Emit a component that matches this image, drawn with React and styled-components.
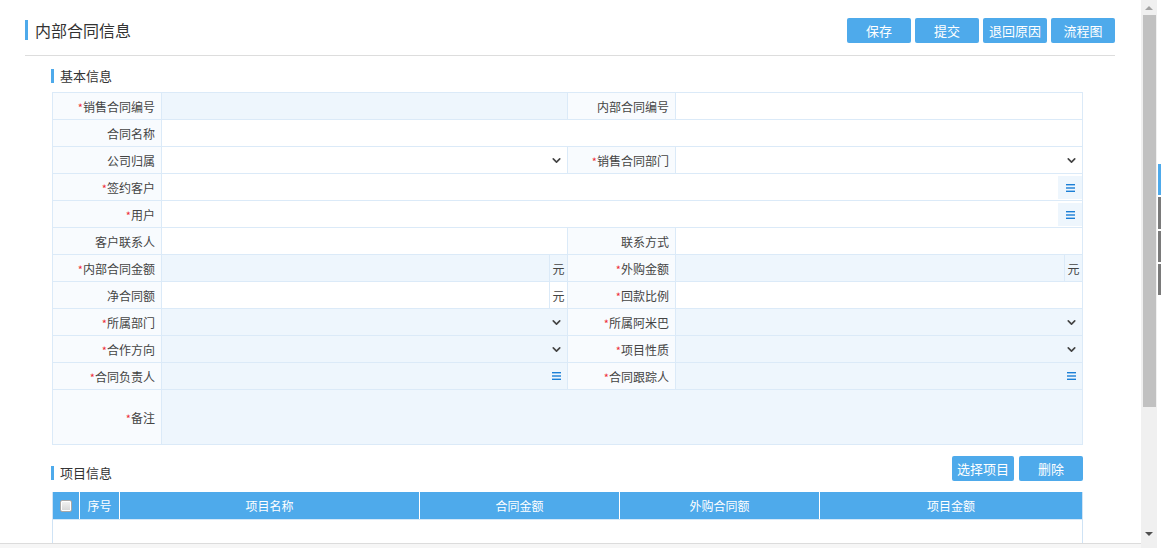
import React from 'react';
import styled, { createGlobalStyle } from 'styled-components';
import { ChevronDown } from 'lucide-react';

const GlobalStyle = createGlobalStyle`
  html, body {
    margin: 0;
    padding: 0;
    background: #fff;
    overflow: hidden;
  }
  body {
    font-family: "Noto Sans CJK SC", "Noto Sans", sans-serif;
    color: #333;
  }
  * {
    box-sizing: border-box;
  }
`;

const Frame = styled.div`
  display: flex;
  width: 1161px;
  height: 548px;
`;

const Main = styled.div`
  display: flex;
  flex-direction: column;
  width: 1141px;
  flex: none;
`;

const Content = styled.div`
  height: 543px;
  overflow: hidden;
  padding: 0 26px 0 25px;
`;

const BottomBar = styled.div`
  height: 5px;
  border-top: 1px solid #dcdcdc;
  background: #f6f6f6;
`;

const Scrollbar = styled.div`
  width: 16px;
  flex: none;
  background: #f0f0f0;
  display: flex;
  flex-direction: column;
  align-items: center;
`;

const Arrow = styled.div`
  width: 0;
  height: 0;
  border-left: 4px solid transparent;
  border-right: 4px solid transparent;
  ${p => (p.$down ? 'border-top: 4px solid #505050;' : 'border-bottom: 4px solid #a3a3a3;')}
  margin: ${p => (p.$down ? '0 0 12px' : '6px 0 0')};
`;

const Thumb = styled.div`
  width: 13px;
  height: 392px;
  margin-top: 5px;
  background: #c1c1c1;
  flex: none;
`;

const Spacer = styled.div`
  flex: 1;
`;

const Edge = styled.div`
  width: 4px;
  flex: none;
  display: flex;
  flex-direction: column;
  padding: 164px 0 0 1px;
  gap: 2px;
  background: #fff;
`;

const EdgeMark = styled.div`
  height: ${p => p.$h}px;
  background: ${p => p.$c};
`;

const Header = styled.div`
  display: flex;
  align-items: center;
  justify-content: space-between;
  padding: 18px 0 12px;
  border-bottom: 1px solid #dddddd;
`;

const PageTitle = styled.h1`
  margin: 0;
  font-size: 16px;
  font-weight: normal;
  line-height: 20px;
  color: #333;
  border-left: 3px solid #4eaaeb;
  padding-left: 7px;
  margin-top: -1px;
`;

const ButtonGroup = styled.div`
  display: flex;
  gap: ${p => p.$gap || 4}px;
`;

const Button = styled.button`
  width: ${p => p.$w || 64}px;
  height: 25px;
  border: none;
  border-radius: 2px;
  background: #4eaaeb;
  color: #fff;
  font-family: inherit;
  font-size: 13px;
  padding: 0;
  cursor: pointer;
`;

const Body = styled.div`
  padding-left: 26px;
`;

const SectionTitle = styled.div`
  font-size: 13px;
  line-height: 14px;
  color: #333;
  border-left: 3px solid #4eaaeb;
  padding-left: 6px;
  margin: ${p => p.$m || '0'};
`;

const FormTable = styled.table`
  width: 1030px;
  border-collapse: collapse;
  table-layout: fixed;
  margin-top: 9px;
  margin-left: 1px;
  font-size: 12px;

  td {
    border: 1px solid #dbeaf8;
    height: 27px;
    padding: 0;
  }
`;

const Label = styled.td`
  background: #f8fbfe;
  text-align: right;
  padding-right: 6px !important;
  color: #444;
  white-space: nowrap;
`;

const Star = styled.span`
  color: #ee2b3a;
  font-size: 11px;
`;

const Value = styled.td`
  background: ${p => (p.$fill ? '#eef6fd' : '#fff')};
  height: ${p => p.$h || 27}px !important;
`;

const ValueInner = styled.div`
  display: flex;
  align-items: stretch;
  height: 100%;
  min-height: 26px;
`;

const Field = styled.div`
  flex: 1;
`;

const Unit = styled.div`
  width: 18px;
  border-left: 1px solid #dbeaf8;
  display: flex;
  align-items: center;
  justify-content: center;
  color: #444;
`;

const Addon = styled.div`
  width: ${p => p.$w || 18}px;
  display: flex;
  align-items: center;
  justify-content: center;
  color: #444;
  background: ${p => (p.$tint ? '#eef6fd' : 'transparent')};
  margin: ${p => (p.$tint ? '2px 0 1px' : '0')};
`;

const ProjectBar = styled.div`
  display: flex;
  align-items: flex-end;
  justify-content: space-between;
  margin-top: 11px;
  width: 1031px;
  margin-left: 1px;
`;

const GridTable = styled.div`
  width: 1031px;
  margin: 11px 0 0 1px;
  border-left: 1px solid #cfe3f5;
  border-right: 1px solid #cfe3f5;
  height: 60px;
`;

const HeadRow = styled.div`
  display: grid;
  grid-template-columns: 26px 40px 300px 200px 200px 1fr;
  background: #4eaaeb;
  height: 28px;
  border-bottom: 1px solid #d4e8f8;
`;

const HeadCell = styled.div`
  color: #fff;
  font-size: 12px;
  display: flex;
  align-items: center;
  justify-content: center;
  border-left: ${p => (p.$first ? 'none' : '1px solid #fff')};
`;

const Check = styled.span`
  width: 12px;
  height: 12px;
  border: 1px solid #a8a8a8;
  background: linear-gradient(#f4f4f4, #d6d6d6);
  border-radius: 2px;
  box-shadow: inset 0 0 0 1px #fff;
`;

const MenuIcon = () => (
  <svg width="9" height="8" viewBox="0 0 9 8">
    <rect x="0" y="0" width="9" height="1.4" fill="#1b7fd6" />
    <rect x="0" y="3.3" width="9" height="1.4" fill="#1b7fd6" />
    <rect x="0" y="6.6" width="9" height="1.4" fill="#1b7fd6" />
  </svg>
);

const Chevron = () => <ChevronDown size={13} strokeWidth={3} color="#444" />;

const Lbl = ({ req, children }) => (
  <Label>
    {req && <Star>*</Star>}
    {children}
  </Label>
);

const Val = ({ fill, addon, colSpan, h }) => (
  <Value $fill={fill} colSpan={colSpan} $h={h}>
    <ValueInner>
      <Field />
      {addon === 'unit' && <Unit>元</Unit>}
      {addon === 'select' && <Addon $w={22}><Chevron /></Addon>}
      {addon === 'menu' && <Addon $w={22}><MenuIcon /></Addon>}
      {addon === 'menubox' && <Addon $w={24} $tint><MenuIcon /></Addon>}
    </ValueInner>
  </Value>
);

export default function App() {
  return (
    <Frame>
      <GlobalStyle />
      <Main>
        <Content>
          <Header>
            <PageTitle>内部合同信息</PageTitle>
            <ButtonGroup>
              <Button>保存</Button>
              <Button>提交</Button>
              <Button>退回原因</Button>
              <Button>流程图</Button>
            </ButtonGroup>
          </Header>

          <Body>
            <SectionTitle $m="13px 0 0">基本信息</SectionTitle>
            <FormTable>
              <colgroup>
                <col style={{ width: 109 }} />
                <col style={{ width: 406 }} />
                <col style={{ width: 108 }} />
                <col style={{ width: 407 }} />
              </colgroup>
              <tbody>
                <tr>
                  <Lbl req>销售合同编号</Lbl>
                  <Val fill />
                  <Lbl>内部合同编号</Lbl>
                  <Val />
                </tr>
                <tr>
                  <Lbl>合同名称</Lbl>
                  <Val colSpan={3} />
                </tr>
                <tr>
                  <Lbl>公司归属</Lbl>
                  <Val addon="select" />
                  <Lbl req>销售合同部门</Lbl>
                  <Val addon="select" />
                </tr>
                <tr>
                  <Lbl req>签约客户</Lbl>
                  <Val colSpan={3} addon="menubox" />
                </tr>
                <tr>
                  <Lbl req>用户</Lbl>
                  <Val colSpan={3} addon="menubox" />
                </tr>
                <tr>
                  <Lbl>客户联系人</Lbl>
                  <Val />
                  <Lbl>联系方式</Lbl>
                  <Val />
                </tr>
                <tr>
                  <Lbl req>内部合同金额</Lbl>
                  <Val fill addon="unit" />
                  <Lbl req>外购金额</Lbl>
                  <Val fill addon="unit" />
                </tr>
                <tr>
                  <Lbl>净合同额</Lbl>
                  <Val addon="unit" />
                  <Lbl req>回款比例</Lbl>
                  <Val />
                </tr>
                <tr>
                  <Lbl req>所属部门</Lbl>
                  <Val fill addon="select" />
                  <Lbl req>所属阿米巴</Lbl>
                  <Val fill addon="select" />
                </tr>
                <tr>
                  <Lbl req>合作方向</Lbl>
                  <Val fill addon="select" />
                  <Lbl req>项目性质</Lbl>
                  <Val fill addon="select" />
                </tr>
                <tr>
                  <Lbl req>合同负责人</Lbl>
                  <Val fill addon="menu" />
                  <Lbl req>合同跟踪人</Lbl>
                  <Val fill addon="menu" />
                </tr>
                <tr>
                  <Lbl req>备注</Lbl>
                  <Val fill colSpan={3} h={55} />
                </tr>
              </tbody>
            </FormTable>

            <ProjectBar>
              <SectionTitle $m="0 0 1px -1px">项目信息</SectionTitle>
              <ButtonGroup $gap={5}>
                <Button $w={62}>选择项目</Button>
                <Button $w={64}>删除</Button>
              </ButtonGroup>
            </ProjectBar>

            <GridTable>
              <HeadRow>
                <HeadCell $first><Check /></HeadCell>
                <HeadCell>序号</HeadCell>
                <HeadCell>项目名称</HeadCell>
                <HeadCell>合同金额</HeadCell>
                <HeadCell>外购合同额</HeadCell>
                <HeadCell>项目金额</HeadCell>
              </HeadRow>
            </GridTable>
          </Body>
        </Content>
        <BottomBar />
      </Main>
      <Scrollbar>
        <Arrow />
        <Thumb />
        <Spacer />
        <Arrow $down />
      </Scrollbar>
      <Edge>
        <EdgeMark $h={31} $c="#4eaaeb" />
        <EdgeMark $h={32} $c="#7a7a7a" />
        <EdgeMark $h={31} $c="#7a7a7a" />
        <EdgeMark $h={31} $c="#7a7a7a" />
      </Edge>
    </Frame>
  );
}
